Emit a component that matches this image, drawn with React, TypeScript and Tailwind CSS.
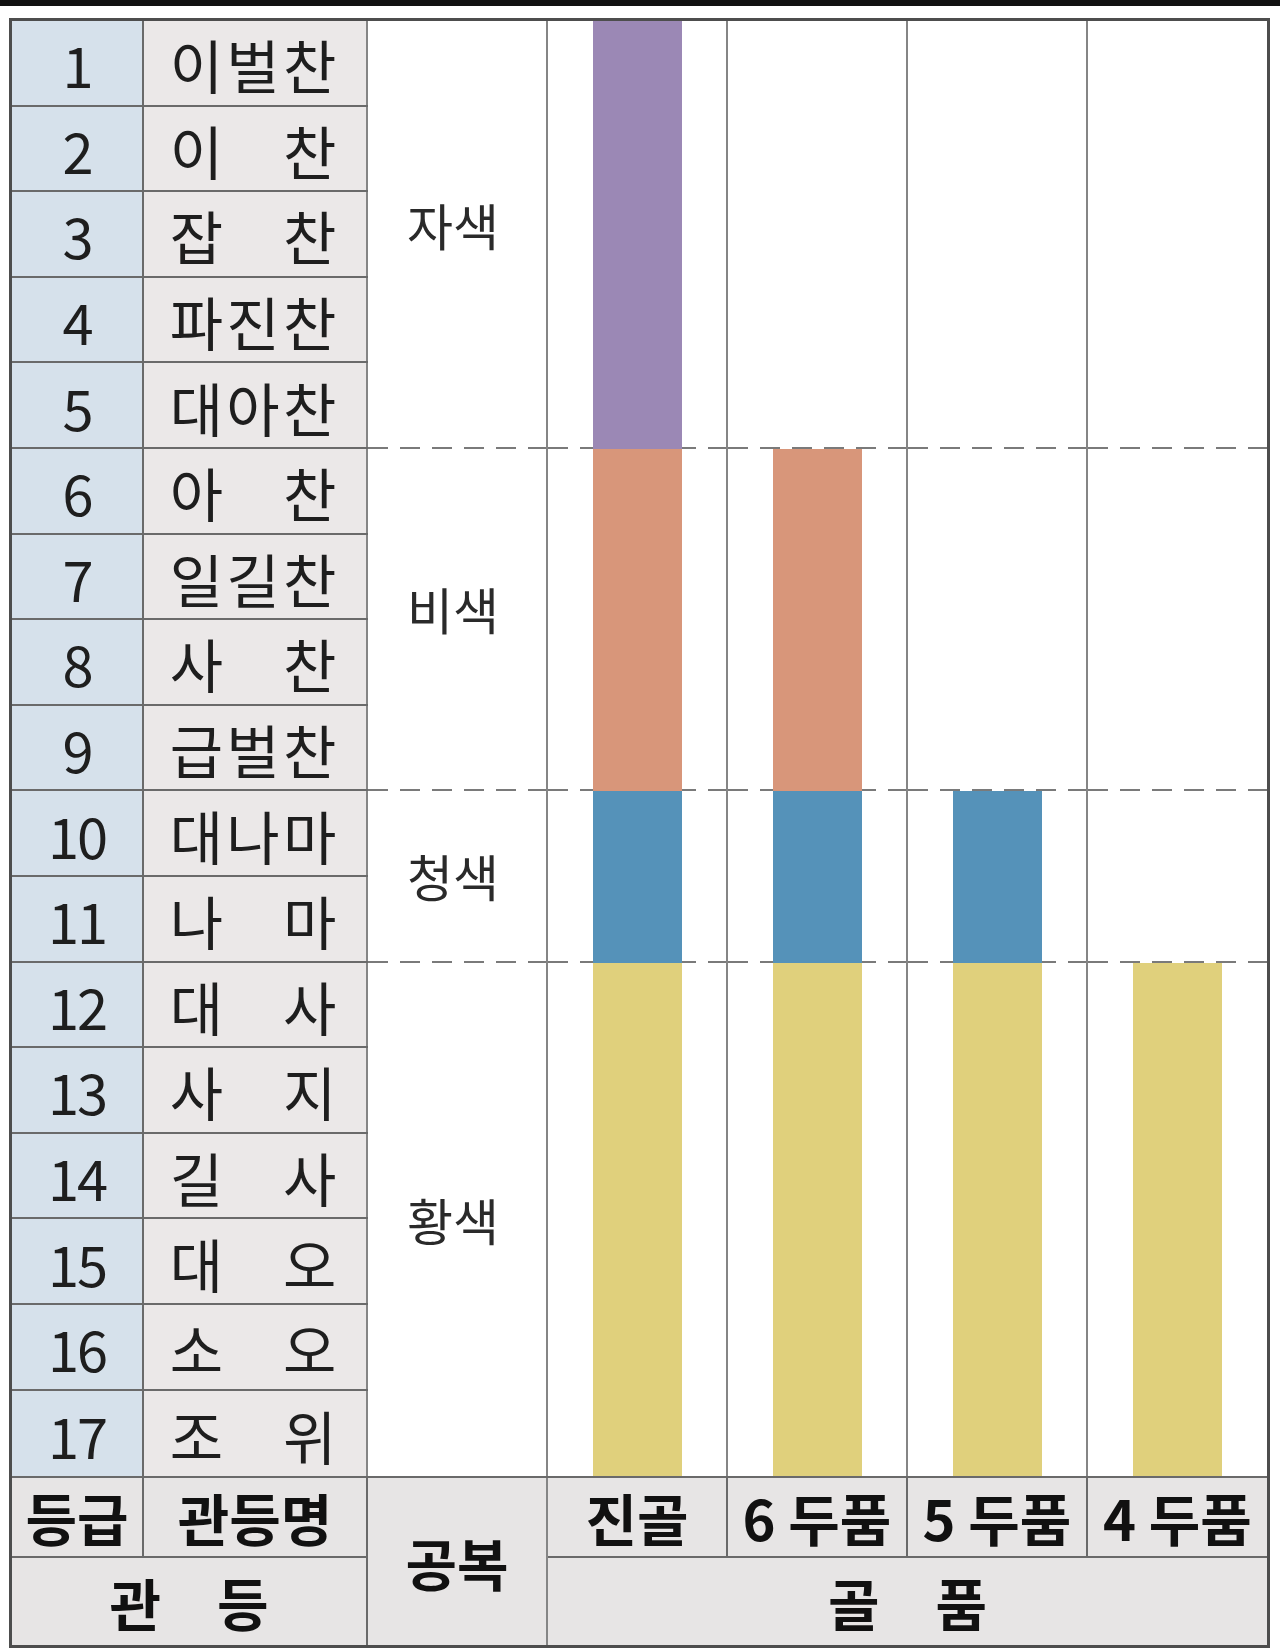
import React from "react";

const ranks: [string, string[]][] = [
  ["1", ["이", "벌", "찬"]],
  ["2", ["이", "", "찬"]],
  ["3", ["잡", "", "찬"]],
  ["4", ["파", "진", "찬"]],
  ["5", ["대", "아", "찬"]],
  ["6", ["아", "", "찬"]],
  ["7", ["일", "길", "찬"]],
  ["8", ["사", "", "찬"]],
  ["9", ["급", "벌", "찬"]],
  ["10", ["대", "나", "마"]],
  ["11", ["나", "", "마"]],
  ["12", ["대", "", "사"]],
  ["13", ["사", "", "지"]],
  ["14", ["길", "", "사"]],
  ["15", ["대", "", "오"]],
  ["16", ["소", "", "오"]],
  ["17", ["조", "", "위"]],
];

// 공복 bands: label, height (rows x 85.6), bar colour, label nudge
const bands = [
  { label: "자색", h: "h-[428px]", color: "bg-[#9b88b5]", nudge: "pb-[22px]" },
  { label: "비색", h: "h-[342.4px]", color: "bg-[#d8967a]", nudge: "pb-[24px]" },
  { label: "청색", h: "h-[171.2px]", color: "bg-[#5592b9]", nudge: "pb-[4px]" },
  { label: "황색", h: "h-[513.6px]", color: "bg-[#e0d07c]", nudge: "" },
];

const dash =
  "bg-[repeating-linear-gradient(90deg,#7a7a7a_0px,#7a7a7a_20px,transparent_20px,transparent_32px)] bg-[length:100%_2px] bg-bottom bg-no-repeat";

// first band (from top) that has a bar in each 골품 column
const grades = [
  { from: 0, last: false },
  { from: 1, last: false },
  { from: 2, last: false },
  { from: 3, last: true },
];

const GradeColumn = ({ from, last }: { from: number; last: boolean }) => (
  <div className={`flex flex-col ${last ? "w-[179px]" : "w-[180px] border-r-2 border-[#858585]"}`}>
    {bands.map((b, i) => (
      <div key={i} className={`${b.h} flex justify-center ${i < 3 ? dash : ""}`}>
        {i >= from && <div className={`w-[89px] h-full ${b.color}`} />}
      </div>
    ))}
  </div>
);

export default function App() {
  return (
    <div className="w-[1280px] h-[1649px] bg-white overflow-hidden font-['Noto_Sans_CJK_KR','Noto_Sans',sans-serif] text-[#1e1e1e]">
      <div className="h-[6px] bg-[#111]" />
      <div className="ml-[9px] mt-[12px] w-[1261px] border-[3px] border-[#4d4d4d]">
        {/* body */}
        <div className="flex">
          <div className="flex flex-col">
            {ranks.map(([n, name], i) => (
              <div
                key={n}
                className={`flex h-[85.6px] ${i < 16 ? "border-b-2 border-[#6a6a6a]" : ""}`}
              >
                <div className="w-[132px] border-r-2 border-[#6a6a6a] bg-[#d6e1eb] flex items-center justify-center text-[56px] leading-none tracking-[-2px] pt-[3px]">
                  {n}
                </div>
                <div className="w-[224px] border-r-2 border-[#858585] bg-[#ebe8e8] flex items-center justify-center pt-[3px] pr-[4px]">
                  <div className="w-[170px] grid grid-cols-3 text-center text-[58px] leading-none">
                    {name.map((c, k) => (
                      <span key={k}>{c}</span>
                    ))}
                  </div>
                </div>
              </div>
            ))}
          </div>

          {/* 공복 */}
          <div className="w-[180px] border-r-2 border-[#858585] flex flex-col">
            {bands.map((b, i) => (
              <div
                key={b.label}
                className={`${b.h} flex items-center justify-center pr-[8px] text-[50px] leading-none text-[#2a2a2a] ${i < 3 ? dash : ""} ${b.nudge}`}
              >
                {b.label}
              </div>
            ))}
          </div>

          {grades.map((g, i) => (
            <GradeColumn key={i} from={g.from} last={g.last} />
          ))}
        </div>

        {/* header */}
        <div className="grid grid-cols-[132px_224px_180px_180px_180px_180px_179px] grid-rows-[80px_87px] border-t-2 border-[#6a6a6a] bg-[#e7e5e5] text-[56px] leading-none font-bold text-[#111]">
          <div className="border-r-2 border-b-2 border-[#6a6a6a] flex items-center justify-center">등급</div>
          <div className="border-r-2 border-b-2 border-[#6a6a6a] flex items-center justify-center">관등명</div>
          <div className="row-span-2 border-r-2 border-[#858585] flex items-center justify-center">공복</div>
          <div className="border-r-2 border-b-2 border-[#6a6a6a] flex items-center justify-center">진골</div>
          <div className="border-r-2 border-b-2 border-[#6a6a6a] flex items-center justify-center">6 두품</div>
          <div className="border-r-2 border-b-2 border-[#6a6a6a] flex items-center justify-center">5 두품</div>
          <div className="border-b-2 border-[#6a6a6a] flex items-center justify-center">4 두품</div>
          <div className="col-span-2 border-r-2 border-[#6a6a6a] flex items-center justify-center">관　등</div>
          <div className="col-span-4 flex items-center justify-center">골　품</div>
        </div>
      </div>
    </div>
  );
}
